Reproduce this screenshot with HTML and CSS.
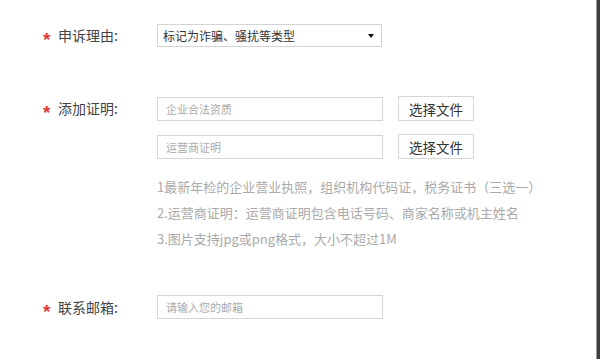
FILE: index.html
```html
<!DOCTYPE html>
<html lang="zh-CN">
<head>
<meta charset="utf-8">
<title>申诉</title>
<link rel="stylesheet" href="styles.css">
</head>
<body>
<div class="page">
  <main class="form">
    <div class="row row-reason">
      <div class="label"><span class="star">*</span>申诉理由:</div>
      <div class="field">
        <div class="select">
          <span class="select-text">标记为诈骗、骚扰等类型</span>
          <span class="arrow"></span>
        </div>
      </div>
    </div>

    <div class="row row-proof">
      <div class="label"><span class="star">*</span>添加证明:</div>
      <div class="field">
        <div class="file-line">
          <div class="input"><span class="ph">企业合法资质</span></div>
          <div class="btn">选择文件</div>
        </div>
        <div class="file-line second">
          <div class="input"><span class="ph">运营商证明</span></div>
          <div class="btn">选择文件</div>
        </div>
        <div class="hints">
          <p>1最新年检的企业营业执照，组织机构代码证，税务证书（三选一）</p>
          <p>2.运营商证明：运营商证明包含电话号码、商家名称或机主姓名</p>
          <p>3.图片支持jpg或png格式，大小不超过1M</p>
        </div>
      </div>
    </div>

    <div class="row row-email">
      <div class="label"><span class="star">*</span>联系邮箱:</div>
      <div class="field">
        <div class="input"><span class="ph">请输入您的邮箱</span></div>
      </div>
    </div>
  </main>
  <div class="edge"></div>
</div>
</body>
</html>
```

FILE: styles.css
```css
html, body {
  margin: 0;
  padding: 0;
  background: #fff;
}

body {
  font-family: "Noto Sans CJK SC", "Liberation Sans", sans-serif;
  color: #333;
}

.page {
  display: flex;
  width: 600px;
  height: 359px;
  overflow: hidden;
}

.form {
  flex: 1;
  padding-left: 43px;
  padding-top: 24px;
}

.row {
  display: flex;
  align-items: flex-start;
}

.label {
  width: 114px;
  flex-shrink: 0;
  display: flex;
  align-items: center;
  font-size: 14px;
  color: #444;
  line-height: 23px;
  height: 23px;
}

.star {
  width: 15px;
  color: #e03a3a;
  font-size: 19px;
  font-weight: bold;
  line-height: 23px;
  position: relative;
  top: 4px;
  font-family: "Liberation Sans", sans-serif;
}

.select {
  box-sizing: border-box;
  width: 225px;
  height: 23px;
  border: 1px solid #d4d4d4;
  display: flex;
  align-items: center;
  justify-content: space-between;
  padding: 0 7px 0 5px;
  font-size: 12px;
  color: #333;
}

.arrow {
  width: 0;
  height: 0;
  border-left: 3px solid transparent;
  border-right: 3px solid transparent;
  border-top: 4px solid #111;
}

.row-proof {
  margin-top: 49px;
}

.row-proof .label {
  height: 24px;
  line-height: 24px;
}

.file-line {
  display: flex;
  align-items: center;
  gap: 15px;
}

.file-line.second {
  margin-top: 13px;
}

.input {
  box-sizing: border-box;
  width: 226px;
  height: 24px;
  border: 1px solid #d6d6d6;
  display: flex;
  align-items: center;
  padding-left: 8px;
}

.ph {
  font-size: 11px;
  color: #aaa;
}

.btn {
  box-sizing: border-box;
  width: 76px;
  height: 25px;
  border: 1px solid #d6d6d6;
  display: flex;
  align-items: center;
  justify-content: center;
  font-size: 13.5px;
  color: #333;
}

.hints {
  margin-top: 15px;
}

.hints p {
  margin: 0;
  font-size: 13px;
  line-height: 26px;
  color: #aaa;
}

.row-email {
  margin-top: 43px;
}

.row-email .label {
  height: 24px;
  line-height: 24px;
}

.edge {
  width: 3px;
  flex-shrink: 0;
  background: #3f3f3f;
  border-left: 1px solid #9a9a9a;
}
```
